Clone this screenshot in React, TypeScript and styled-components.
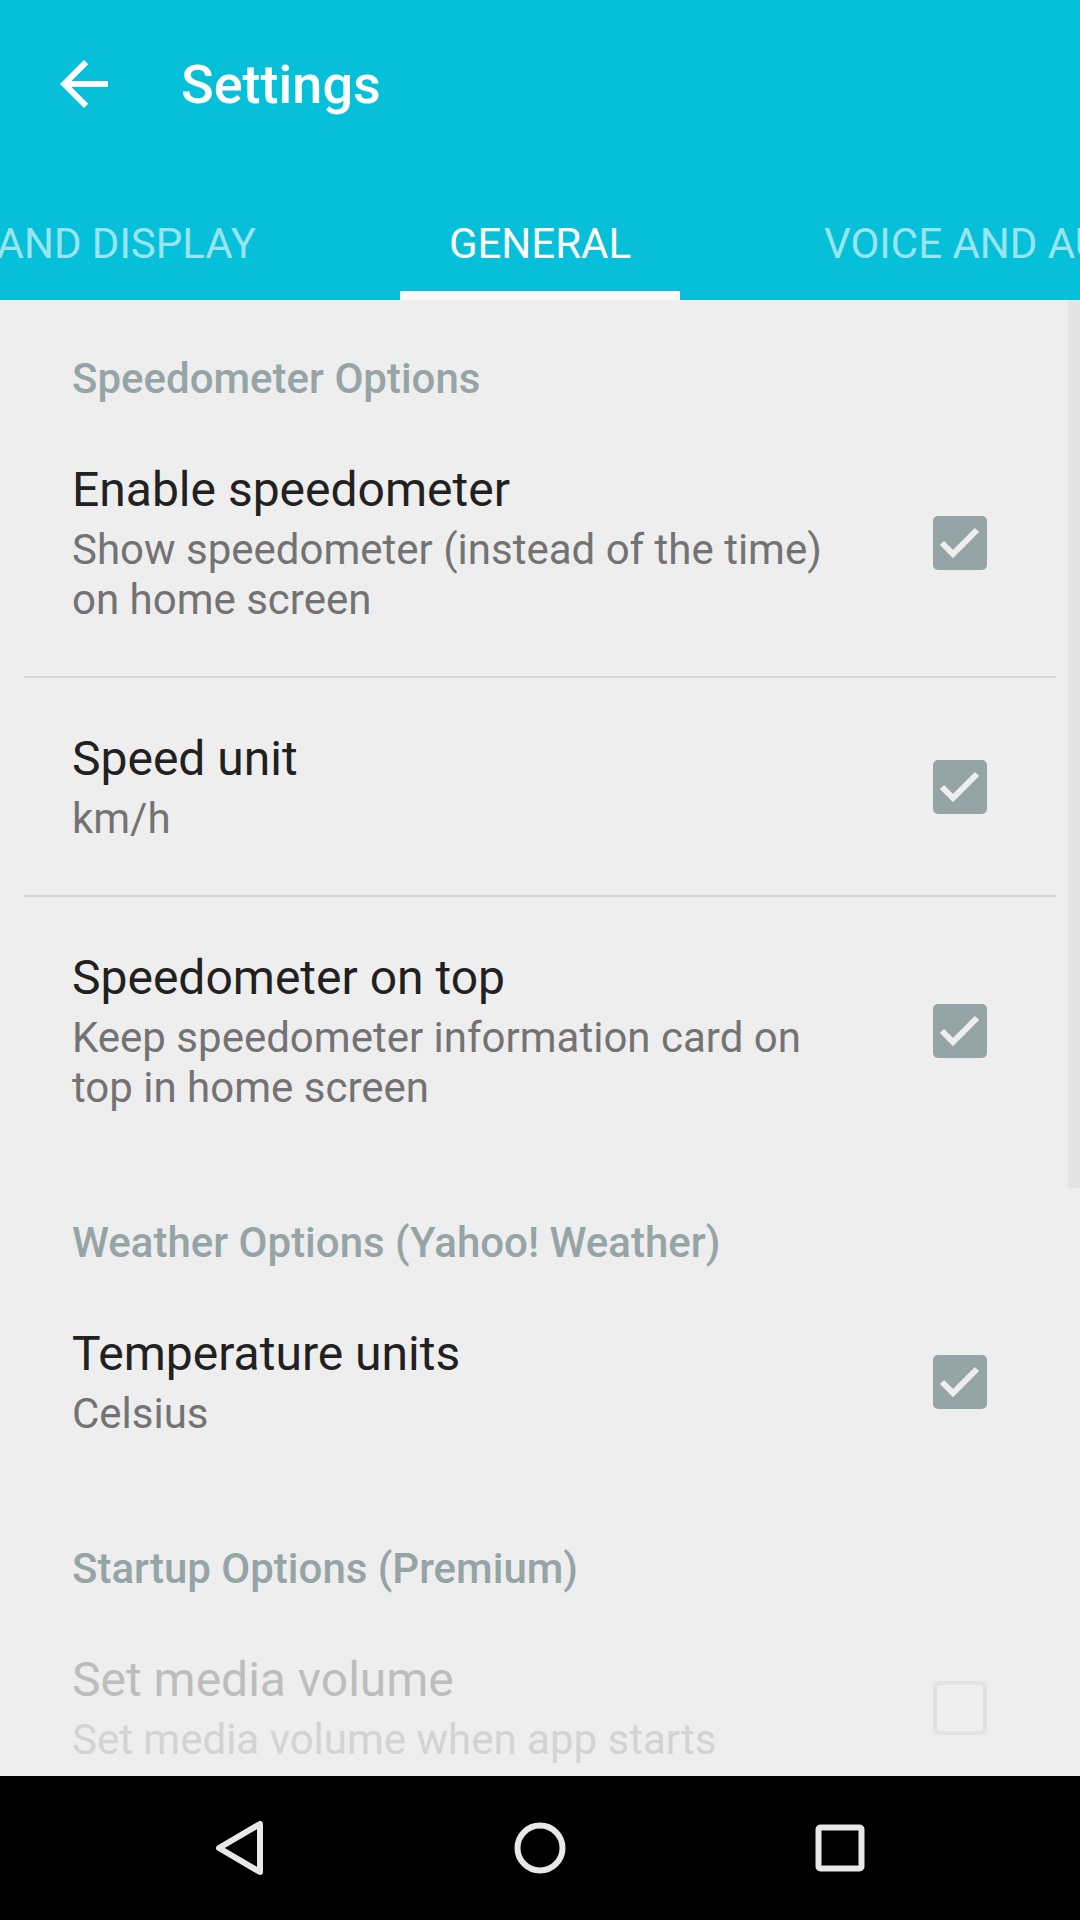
import React from 'react';
import styled, { createGlobalStyle } from 'styled-components';

const GlobalStyle = createGlobalStyle`
  html, body {
    margin: 0;
    padding: 0;
    background: #eeeeee;
    font-family: Roboto, "Noto Sans", "Liberation Sans", sans-serif;
  }
`;

const Screen = styled.div`
  width: 1080px;
  height: 1920px;
  display: flex;
  flex-direction: column;
  overflow: hidden;
  background: #eeeeee;
`;

const AppBar = styled.header`
  background: #06c0da;
  flex: none;
`;

const Toolbar = styled.div`
  height: 168px;
  display: flex;
  align-items: center;
  padding-left: 48px;
`;

const Title = styled.h1`
  margin: 0 0 0 61px;
  font-size: 54px;
  font-weight: 500;
  color: #ffffff;
`;

const TabStrip = styled.nav`
  height: 132px;
  display: grid;
  grid-template-columns: 1fr 280px 1fr;
`;

const Tab = styled.div<{ $side: 'left' | 'center' | 'right' }>`
  display: flex;
  flex-direction: column;
  align-items: ${p => (p.$side === 'left' ? 'flex-end' : p.$side === 'right' ? 'flex-start' : 'center')};
  overflow: hidden;
  padding-top: 51px;
  padding-right: ${p => (p.$side === 'left' ? '144px' : '0')};
  padding-left: ${p => (p.$side === 'right' ? '144px' : '0')};
`;

const TabLabel = styled.span<{ $active?: boolean }>`
  font-size: 42px;
  line-height: 50px;
  white-space: nowrap;
  color: ${p => (p.$active ? '#ffffff' : 'rgba(255, 255, 255, 0.6)')};
`;

const TabIndicator = styled.div`
  margin-top: auto;
  align-self: stretch;
  height: 9px;
  background: #fafafa;
`;

const Content = styled.main`
  flex: 1;
  position: relative;
  overflow: hidden;
`;

const ScrollThumb = styled.div`
  position: absolute;
  top: 0;
  right: 0;
  width: 12px;
  height: 888px;
  background: #e4e4e4;
`;

const SectionHeader = styled.div`
  padding: 54px 72px 5px 72px;
  font-size: 42px;
  line-height: 50px;
  font-weight: 500;
  color: #95a5a6;
`;

const PrefRow = styled.div`
  display: grid;
  grid-template-columns: 1fr 54px;
  column-gap: 93px;
  align-items: center;
  padding: 52px 93px 51px 72px;
`;

const PrefText = styled.div`
  display: flex;
  flex-direction: column;
`;

const PrefTitle = styled.div<{ $disabled?: boolean }>`
  font-size: 48px;
  line-height: 57px;
  color: ${p => (p.$disabled ? '#bdbdbd' : '#212121')};
`;

const PrefSummary = styled.div<{ $disabled?: boolean }>`
  margin-top: 7px;
  font-size: 42px;
  line-height: 50px;
  color: ${p => (p.$disabled ? '#d3d3d3' : '#737373')};
`;

const Divider = styled.hr`
  margin: 0 24px;
  border: 0;
  height: 2px;
  background: #d6d6d6;
`;

const NavBar = styled.footer`
  height: 144px;
  flex: none;
  background: #000000;
  display: flex;
  justify-content: center;
  align-items: center;
  gap: 200px;
`;

const NavButton = styled.div`
  width: 100px;
  height: 100px;
  display: flex;
  align-items: center;
  justify-content: center;
`;

const BackArrow = () => (
  <svg width="72" height="72" viewBox="0 0 24 24">
    <path fill="#ffffff" d="M20 11H7.83l5.59-5.59L12 4l-8 8 8 8 1.41-1.41L7.83 13H20v-2z" />
  </svg>
);

const CheckBox = ({ checked, disabled }: { checked: boolean; disabled?: boolean }) => (
  <svg width="54" height="54" viewBox="0 0 54 54">
    {checked ? (
      <>
        <rect x="0" y="0" width="54" height="54" rx="5" fill="#95a5a6" />
        <path d="M9 27 L20 38 L44 14" fill="none" stroke="#eeeeee" strokeWidth="6" />
      </>
    ) : (
      <rect
        x="2"
        y="2"
        width="50"
        height="50"
        rx="4"
        fill="none"
        stroke={disabled ? '#e2e2e2' : '#95a5a6'}
        strokeWidth="4"
      />
    )}
  </svg>
);

interface Pref {
  title: string;
  summary: string;
  checked: boolean;
  disabled?: boolean;
}

interface Section {
  header: string;
  items: Pref[];
}

const sections: Section[] = [
  {
    header: 'Speedometer Options',
    items: [
      { title: 'Enable speedometer', summary: 'Show speedometer (instead of the time) on home screen', checked: true },
      { title: 'Speed unit', summary: 'km/h', checked: true },
      { title: 'Speedometer on top', summary: 'Keep speedometer information card on top in home screen', checked: true },
    ],
  },
  {
    header: 'Weather Options (Yahoo! Weather)',
    items: [{ title: 'Temperature units', summary: 'Celsius', checked: true }],
  },
  {
    header: 'Startup Options (Premium)',
    items: [
      { title: 'Set media volume', summary: 'Set media volume when app starts', checked: false, disabled: true },
    ],
  },
];

const App: React.FC = () => {
  return (
    <>
      <GlobalStyle />
      <Screen>
        <AppBar>
          <Toolbar>
            <BackArrow />
            <Title>Settings</Title>
          </Toolbar>
          <TabStrip>
            <Tab $side="left">
              <TabLabel>MAP AND DISPLAY</TabLabel>
            </Tab>
            <Tab $side="center">
              <TabLabel $active>GENERAL</TabLabel>
              <TabIndicator />
            </Tab>
            <Tab $side="right">
              <TabLabel>VOICE AND AUDIO</TabLabel>
            </Tab>
          </TabStrip>
        </AppBar>

        <Content>
          {sections.map(section => (
            <div key={section.header}>
              <SectionHeader>{section.header}</SectionHeader>
              {section.items.map((item, i) => (
                <React.Fragment key={item.title}>
                  {i > 0 && <Divider />}
                  <PrefRow>
                    <PrefText>
                      <PrefTitle $disabled={item.disabled}>{item.title}</PrefTitle>
                      <PrefSummary $disabled={item.disabled}>{item.summary}</PrefSummary>
                    </PrefText>
                    <CheckBox checked={item.checked} disabled={item.disabled} />
                  </PrefRow>
                </React.Fragment>
              ))}
            </div>
          ))}
          <ScrollThumb />
        </Content>

        <NavBar>
          <NavButton>
            <svg width="60" height="60" viewBox="0 0 60 60">
              <path d="M9 30 L50 6 L50 54 Z" fill="none" stroke="#e8e8e8" strokeWidth="6" strokeLinejoin="round" />
            </svg>
          </NavButton>
          <NavButton>
            <svg width="60" height="60" viewBox="0 0 60 60">
              <circle cx="30" cy="30" r="22.5" fill="none" stroke="#e8e8e8" strokeWidth="6" />
            </svg>
          </NavButton>
          <NavButton>
            <svg width="60" height="60" viewBox="0 0 60 60">
              <rect x="8.5" y="9.5" width="43" height="41" rx="2" fill="none" stroke="#e8e8e8" strokeWidth="6" />
            </svg>
          </NavButton>
        </NavBar>
      </Screen>
    </>
  );
};

export default App;
